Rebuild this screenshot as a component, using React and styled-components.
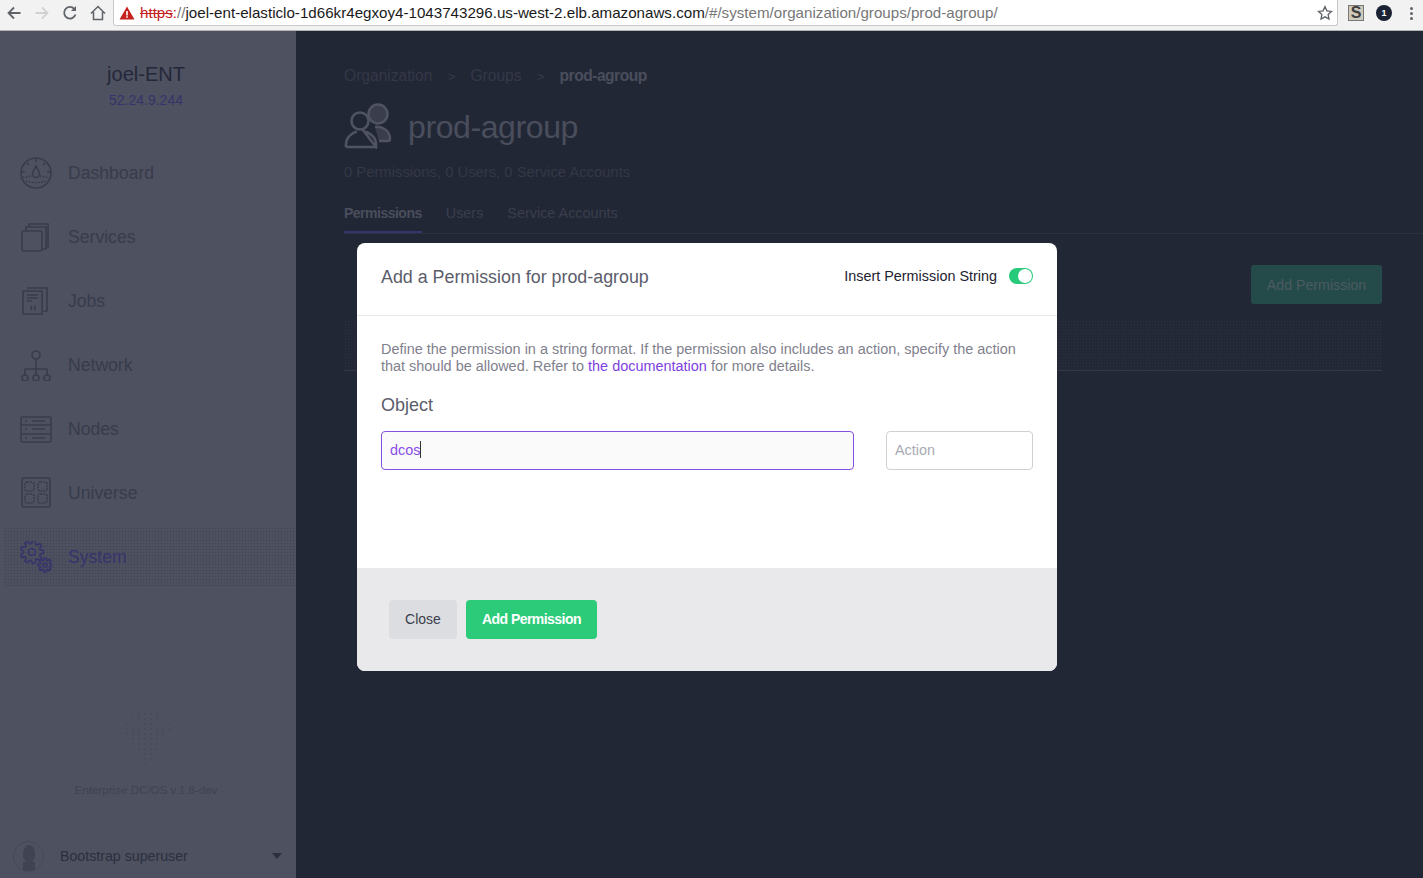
import styled, { createGlobalStyle } from "styled-components";

const GlobalStyle = createGlobalStyle`
    html, body {
        margin: 0;
        padding: 0;
        height: 100%;
        overflow: hidden;
        font-family: "Liberation Sans", Arial, sans-serif;
    }
    * { box-sizing: border-box; }
`;

const dim = "#383c4c";
const purple = "#37336c";

// cog outline, used by the System icon
function gearPath(cx, cy, outer, inner, teeth) {
    const pts = [];
    const step = (Math.PI * 2) / teeth;
    for (let i = 0; i < teeth; i++) {
        const a = i * step;
        [[-0.36, inner], [-0.2, outer], [0.2, outer], [0.36, inner]].forEach(([t, r]) => {
            const x = cx + Math.cos(a + t * step) * r;
            const y = cy + Math.sin(a + t * step) * r;
            pts.push(`${x.toFixed(2)} ${y.toFixed(2)}`);
        });
    }
    return `M${pts.join("L")}Z`;
}

const icons = {
    dashboard: (
        <>
            <circle cx="16" cy="16" r="15" />
            <path d="M16 9c-1.500 3.500-3.500 5.500-3.500 8a3.500 3.500 0 0 0 7 0c0-2.500-2-4.500-3.500-8z" />
            <path d="M3 20c3 1 6-1 9-1M20 19c3 0 6 2 9 1M6 24c6 2 14 2 20 0" strokeDasharray="1.500 1.500" />
            <path d="M16 2v3M7 6l2 2M25 6l-2 2M2 15h3M30 15h-3" />
        </>
    ),
    services: (
        <>
            <path d="M9 6V3h19v23h-3" />
            <path d="M6 10V6h20v22h-4" />
            <rect x="2" y="10" width="20" height="20" rx="2" />
        </>
    ),
    jobs: (
        <>
            <path d="M7 3h20v23h-4" />
            <path d="M3 6h19v23H3z" />
            <path d="M7 10h11M7 13h11M7 16h5" />
            <path d="M12 25c-1.500-1-1.500-3 0-4M14 21c1.500 1 1.500 3 0 4" />
        </>
    ),
    network: (
        <>
            <circle cx="16" cy="6" r="4" />
            <path d="M16 10v10M5 26v-6h22v6M16 20v6" />
            <circle cx="5" cy="29" r="3" />
            <circle cx="16" cy="29" r="3" />
            <circle cx="27" cy="29" r="3" />
        </>
    ),
    nodes: (
        <>
            <rect x="1" y="4" width="30" height="25" rx="1.500" />
            <path d="M1 12h30M1 21h30M12 8h13M12 16h13M12 25h13M5 8h2M5 16h2M5 25h2" />
        </>
    ),
    universe: (
        <>
            <rect x="2" y="1" width="28" height="29" rx="2" />
            <rect x="5" y="5" width="9" height="9" rx="2" strokeDasharray="2 1" />
            <rect x="18" y="5" width="9" height="9" rx="2" strokeDasharray="2 1" />
            <rect x="5" y="17" width="9" height="9" rx="2" strokeDasharray="2 1" />
            <rect x="18" y="17" width="9" height="9" rx="2" strokeDasharray="2 1" />
        </>
    ),
    system: (
        <>
            <path d={gearPath(12, 11, 11.500, 8.500, 9)} />
            <circle cx="12" cy="11" r="3.500" />
            <path d={gearPath(25, 24, 7, 5, 8)} />
            <circle cx="25" cy="24" r="2" />
        </>
    ),
};

const navItems = [
    { label: "Dashboard", icon: "dashboard" },
    { label: "Services", icon: "services" },
    { label: "Jobs", icon: "jobs" },
    { label: "Network", icon: "network" },
    { label: "Nodes", icon: "nodes" },
    { label: "Universe", icon: "universe" },
    { label: "System", icon: "system", active: true },
];

function NavIcon({ name }) {
    return (
        <NavGlyph viewBox="0 0 32 32" fill="none" stroke="currentColor" strokeWidth="1.600">
            {icons[name]}
        </NavGlyph>
    );
}

export default function App() {
    return (
        <Page>
            <GlobalStyle />
            <BrowserBar>
                <BrowserButtons>
                    <svg width="16" height="16" viewBox="0 0 16 16" fill="none" stroke="#5f6368" strokeWidth="1.800">
                        <path d="M14.500 8H2.500M8 2.500 2.500 8 8 13.500" />
                    </svg>
                    <svg width="16" height="16" viewBox="0 0 16 16" fill="none" stroke="#d2d2d2" strokeWidth="1.800">
                        <path d="M1.500 8h12M8 2.500 13.500 8 8 13.500" />
                    </svg>
                    <svg width="16" height="16" viewBox="0 0 16 16" fill="none" stroke="#5f6368" strokeWidth="1.800">
                        <path d="M13.500 9.500A5.800 5.800 0 1 1 12.200 3.800" />
                        <path d="M14 1v5H9z" fill="#5f6368" stroke="none" />
                    </svg>
                    <svg width="16" height="16" viewBox="0 0 16 16" fill="none" stroke="#5f6368" strokeWidth="1.500">
                        <path d="M1 8.500 8 1.500l7 7M3.500 7v7.500h9V7" />
                    </svg>
                </BrowserButtons>
                <AddressBox>
                    <svg width="16" height="14" viewBox="0 0 16 14">
                        <path d="M8 0.500 15.500 13.500H0.500z" fill="#c5221f" />
                        <path d="M7.200 5h1.600v4.500H7.200zM7.200 10.300h1.600v1.500H7.200z" fill="#fff" />
                    </svg>
                    <Url>
                        <Insecure>https</Insecure>
                        <InsecureColon>:</InsecureColon>
                        <UrlPath>//</UrlPath>
                        joel-ent-elasticlo-1d66kr4egxoy4-1043743296.us-west-2.elb.amazonaws.com
                        <UrlPath>/#/system/organization/groups/prod-agroup/</UrlPath>
                    </Url>
                    <svg width="16" height="16" viewBox="0 0 24 24" fill="none" stroke="#5f6368" strokeWidth="2">
                        <path d="M12 2.500l2.900 6.300 6.800.800-5 4.700 1.300 6.800-6-3.400-6 3.400 1.300-6.800-5-4.700 6.800-.800z" />
                    </svg>
                </AddressBox>
                <Extensions>
                    <StumbleBadge>S</StumbleBadge>
                    <CountBadge>1</CountBadge>
                    <MenuDots>
                        <i />
                        <i />
                        <i />
                    </MenuDots>
                </Extensions>
            </BrowserBar>

            <Body>
                <Sidebar>
                    <ClusterInfo>
                        <ClusterName>joel-ENT</ClusterName>
                        <ClusterIp>52.24.9.244</ClusterIp>
                    </ClusterInfo>
                    <Nav>
                        {navItems.map((item) => (
                            <NavRow key={item.label} $active={item.active}>
                                <NavIcon name={item.icon} />
                                <NavLabel>{item.label}</NavLabel>
                            </NavRow>
                        ))}
                    </Nav>
                    <SidebarFooter>
                        <FadedLogo width="54" height="56" viewBox="0 0 54 56">
                            <defs>
                                <pattern id="logoDots" width="6" height="5" patternUnits="userSpaceOnUse">
                                    <circle cx="2" cy="2" r="0.800" fill="#434654" />
                                </pattern>
                            </defs>
                            <path d="M1 14 16 1h22l15 13-26 42z" fill="url(#logoDots)" />
                        </FadedLogo>
                        <Version>Enterprise DC/OS v.1.8-dev</Version>
                        <UserRow>
                            <Avatar>
                                <svg width="14" height="26" viewBox="0 0 14 26">
                                    <ellipse cx="7" cy="9" rx="6" ry="9" fill="#3f4352" />
                                    <rect x="1" y="17" width="12" height="9" fill="#3f4352" />
                                </svg>
                            </Avatar>
                            <UserName>Bootstrap superuser</UserName>
                            <Caret />
                        </UserRow>
                    </SidebarFooter>
                </Sidebar>

                <Main>
                    <Breadcrumbs>
                        <Crumb>Organization</Crumb>
                        <CrumbSep>&gt;</CrumbSep>
                        <Crumb>Groups</Crumb>
                        <CrumbSep>&gt;</CrumbSep>
                        <Crumb $current>prod-agroup</Crumb>
                    </Breadcrumbs>
                    <TitleRow>
                        <svg width="48" height="46" viewBox="0 0 48 46" fill="none" stroke="#505462" strokeWidth="2.500">
                            <circle cx="34" cy="11" r="9.500" fill="#3a3e4c" />
                            <path d="M31 24c8-1 15 4 15 12 0 1-1 2-3 2h-8" fill="#3a3e4c" />
                            <circle cx="16" cy="18" r="8.500" fill="#222736" />
                            <path d="M2 44c-1-9 5-14 11-15.500M20 28.500c7 1.500 13 6.500 12 15.500z" />
                            <path d="M2 44h30" />
                        </svg>
                        <PageTitle>prod-agroup</PageTitle>
                    </TitleRow>
                    <Summary>0 Permissions, 0 Users, 0 Service Accounts</Summary>
                    <Tabs>
                        <Tab $active>Permissions</Tab>
                        <Tab>Users</Tab>
                        <Tab>Service Accounts</Tab>
                    </Tabs>
                    <ActionBar>
                        <GhostButton>Add Permission</GhostButton>
                    </ActionBar>
                    <EmptyRow />
                </Main>

                <Modal>
                    <ModalHeader>
                        <ModalTitle>Add a Permission for prod-agroup</ModalTitle>
                        <ToggleLabel>Insert Permission String</ToggleLabel>
                        <Toggle />
                    </ModalHeader>
                    <ModalBody>
                        <Description>
                            Define the permission in a string format. If the permission also includes an action, specify the action
                            that should be allowed. Refer to <DocLink>the documentation</DocLink> for more details.
                        </Description>
                        <FieldLabel>Object</FieldLabel>
                        <Fields>
                            <ObjectField>
                                dcos
                                <TextCaret />
                            </ObjectField>
                            <ActionField>Action</ActionField>
                        </Fields>
                    </ModalBody>
                    <ModalFooter>
                        <CloseButton>Close</CloseButton>
                        <SubmitButton>Add Permission</SubmitButton>
                    </ModalFooter>
                </Modal>
            </Body>
        </Page>
    );
}

const Page = styled.div`
    width: 100%;
    height: 100vh;
    display: flex;
    flex-direction: column;
    background: #222736;
`;

const BrowserBar = styled.div`
    height: 31px;
    flex: none;
    display: flex;
    align-items: flex-start;
    background: #f2f2f2;
    border-bottom: 1px solid #b4b4b4;
`;

const BrowserButtons = styled.div`
    width: 113px;
    height: 26px;
    padding: 0 0 0 6px;
    display: flex;
    align-items: center;
    gap: 12px;
`;

const AddressBox = styled.div`
    width: 1225px;
    height: 26px;
    padding: 0 4px 0 5px;
    display: flex;
    align-items: center;
    background: #fff;
    border: 1px solid #c8c8c8;
    border-top: none;
    border-radius: 0 0 3px 3px;
`;

const Url = styled.div`
    flex: 1;
    margin-left: 5px;
    font-size: 15.150px;
    color: #1a1a1a;
    white-space: nowrap;
`;

const Insecure = styled.span`
    color: #c5221f;
    text-decoration: line-through;
`;

const InsecureColon = styled.span`
    color: #c5221f;
`;

const UrlPath = styled.span`
    color: #777;
`;

const Extensions = styled.div`
    flex: 1;
    height: 26px;
    padding-left: 10px;
    display: flex;
    align-items: center;
`;

const StumbleBadge = styled.div`
    width: 16px;
    height: 16px;
    display: flex;
    align-items: center;
    justify-content: center;
    font-size: 16px;
    font-weight: bold;
    color: #3e3e3e;
    background: #cfcabb;
    border: 1px solid #777;
`;

const CountBadge = styled.div`
    width: 16px;
    height: 16px;
    margin-left: 12px;
    display: flex;
    align-items: center;
    justify-content: center;
    border-radius: 50%;
    font-size: 9px;
    font-weight: bold;
    color: #fff;
    background: #1b2233;
`;

const MenuDots = styled.div`
    margin-left: 18px;
    display: flex;
    flex-direction: column;
    gap: 2px;

    i {
        width: 3px;
        height: 3px;
        border-radius: 50%;
        background: #5f6368;
    }
`;

const Body = styled.div`
    position: relative;
    flex: 1;
    min-height: 0;
    display: flex;
`;

const Sidebar = styled.aside`
    width: 296px;
    flex: none;
    display: flex;
    flex-direction: column;
    background: #4e515f;
`;

const ClusterInfo = styled.div`
    height: 110px;
    padding: 33px 4px 0 0;
    text-align: center;
    line-height: 1;
`;

const ClusterName = styled.div`
    font-size: 20px;
    color: #24283a;
`;

const ClusterIp = styled.div`
    margin-top: 9px;
    font-size: 14px;
    color: ${purple};
`;

const Nav = styled.nav`
    display: flex;
    flex-direction: column;
`;

const NavRow = styled.div`
    position: relative;
    height: 64px;
    padding-left: 20px;
    display: flex;
    align-items: center;
    gap: 16px;
    font-size: 17.600px;
    color: ${(p) => (p.$active ? purple : dim)};

    ${(p) =>
        p.$active &&
        `&::before {
            content: "";
            position: absolute;
            inset: 2px 0 3px 4px;
            background-image: radial-gradient(circle, #434655 0.8px, transparent 1.1px);
            background-size: 3px 3px;
        }`}
`;

const NavGlyph = styled.svg`
    position: relative;
    width: 32px;
    height: 32px;
    flex: none;
`;

const NavLabel = styled.span`
    position: relative;
`;

const SidebarFooter = styled.div`
    margin-top: auto;
    display: flex;
    flex-direction: column;
    align-items: center;
`;

const FadedLogo = styled.svg`
    margin-right: 4px;
`;

const Version = styled.div`
    margin: 15px 4px 0 0;
    font-size: 11.600px;
    line-height: 13px;
    color: #3f4352;
`;

const UserRow = styled.div`
    width: 100%;
    height: 38px;
    margin-top: 41px;
    margin-bottom: 3px;
    padding: 0 14px 0 13px;
    display: flex;
    align-items: center;
`;

const Avatar = styled.div`
    width: 31px;
    height: 31px;
    display: flex;
    align-items: flex-end;
    justify-content: center;
    overflow: hidden;
    border: 1px solid #454958;
    border-radius: 50%;
`;

const UserName = styled.div`
    flex: 1;
    margin-left: 16px;
    font-size: 14.200px;
    color: #2b2f3f;
`;

const Caret = styled.div`
    width: 0;
    height: 0;
    border-left: 5px solid transparent;
    border-right: 5px solid transparent;
    border-top: 6px solid #2b2f3f;
`;

const Main = styled.main`
    flex: 1;
    min-width: 0;
    padding: 35px 41px 0 48px;
    display: flex;
    flex-direction: column;
`;

const Breadcrumbs = styled.div`
    height: 20px;
    display: flex;
    align-items: center;
    font-size: 15.600px;
`;

const Crumb = styled.span`
    color: ${(p) => (p.$current ? "#4a4e5c" : "#343847")};
    font-weight: ${(p) => (p.$current ? "bold" : "normal")};
    letter-spacing: ${(p) => (p.$current ? "-0.500px" : "0")};
`;

const CrumbSep = styled.span`
    width: 38px;
    text-align: center;
    font-size: 13px;
    color: #343847;
`;

const TitleRow = styled.div`
    margin-top: 16px;
    height: 48px;
    display: flex;
    align-items: center;
    gap: 16px;
`;

const PageTitle = styled.h1`
    margin: 0;
    padding-top: 2px;
    font-size: 32px;
    font-weight: normal;
    letter-spacing: -0.400px;
    color: #4a4e5c;
`;

const Summary = styled.div`
    margin-top: 14px;
    font-size: 14.800px;
    line-height: 17px;
    color: #343847;
`;

const Tabs = styled.div`
    margin: 16px -41px 0 0;
    height: 37px;
    display: flex;
    gap: 24px;
    border-bottom: 1px solid #2c3140;
`;

const Tab = styled.div`
    height: 36px;
    padding-top: 8px;
    font-size: ${(p) => (p.$active ? "14px" : "14.400px")};
    font-weight: ${(p) => (p.$active ? "bold" : "normal")};
    letter-spacing: ${(p) => (p.$active ? "-0.500px" : "0")};
    color: ${(p) => (p.$active ? "#4a4e5c" : "#3a3e4d")};
    border-bottom: 2px solid ${(p) => (p.$active ? purple : "transparent")};
`;

const ActionBar = styled.div`
    margin-top: 31px;
    display: flex;
    justify-content: flex-end;
`;

const GhostButton = styled.div`
    width: 131px;
    height: 39px;
    display: flex;
    align-items: center;
    justify-content: center;
    border-radius: 3px;
    font-size: 14.200px;
    color: #4a5c60;
    background: #254a4a;
`;

const EmptyRow = styled.div`
    margin-top: 16px;
    height: 51px;
    background-color: #232836;
    background-image: radial-gradient(circle, #2e323e 0.7px, transparent 1px);
    background-size: 3px 3px;
    border-bottom: 1px solid #333847;
`;

const Modal = styled.section`
    position: absolute;
    left: 357px;
    top: 212px;
    width: 700px;
    height: 428px;
    display: flex;
    flex-direction: column;
    overflow: hidden;
    border-radius: 8px;
    background: #fff;
`;

const ModalHeader = styled.header`
    height: 73px;
    flex: none;
    padding: 0 24px 4px;
    display: flex;
    align-items: center;
    border-bottom: 1px solid #e8e8ea;
`;

const ModalTitle = styled.h2`
    flex: 1;
    margin: 0;
    font-size: 17.850px;
    font-weight: normal;
    color: #5b5d6b;
`;

const ToggleLabel = styled.span`
    margin-top: -2px;
    font-size: 14.400px;
    color: #1e2230;
`;

const Toggle = styled.div`
    position: relative;
    width: 24px;
    height: 16px;
    margin: -3px 0 0 12px;
    border-radius: 8px;
    background: #27c97a;

    &::after {
        content: "";
        position: absolute;
        right: 1px;
        top: 1px;
        width: 14px;
        height: 14px;
        border-radius: 50%;
        background: #fff;
    }
`;

const ModalBody = styled.div`
    flex: 1;
    padding: 25px 24px 0;
`;

const Description = styled.p`
    margin: 0;
    font-size: 14.450px;
    line-height: 17px;
    color: #7f818d;
`;

const DocLink = styled.a`
    color: #7d3fe0;
`;

const FieldLabel = styled.div`
    margin-top: 19px;
    font-size: 18px;
    line-height: 22px;
    color: #5b5d6b;
`;

const Fields = styled.div`
    margin-top: 15px;
    display: grid;
    grid-template-columns: 473px 147px;
    justify-content: space-between;
`;

const Field = styled.div`
    height: 39px;
    padding: 0 8px 2px;
    display: flex;
    align-items: center;
    font-size: 14.400px;
    border-radius: 4px;
`;

const ObjectField = styled(Field)`
    color: #8a4ce8;
    background: #fafafa;
    border: 1px solid #8650e0;
`;

const TextCaret = styled.span`
    width: 1px;
    height: 17px;
    background: #333;
`;

const ActionField = styled(Field)`
    color: #a9abb2;
    border: 1px solid #cfd0d4;
`;

const ModalFooter = styled.footer`
    height: 103px;
    flex: none;
    padding: 32px 32px 0;
    display: flex;
    align-items: flex-start;
    gap: 9px;
    background: #e9e9eb;
`;

const FooterButton = styled.button`
    height: 39px;
    padding: 0 0 2px;
    border: none;
    border-radius: 4px;
    font-family: inherit;
    font-size: 14px;
`;

const CloseButton = styled(FooterButton)`
    width: 68px;
    color: #3a3e4e;
    background: #dcdde0;
`;

const SubmitButton = styled(FooterButton)`
    width: 131px;
    font-weight: bold;
    letter-spacing: -0.550px;
    color: #fff;
    background: #2bcb7a;
`;
